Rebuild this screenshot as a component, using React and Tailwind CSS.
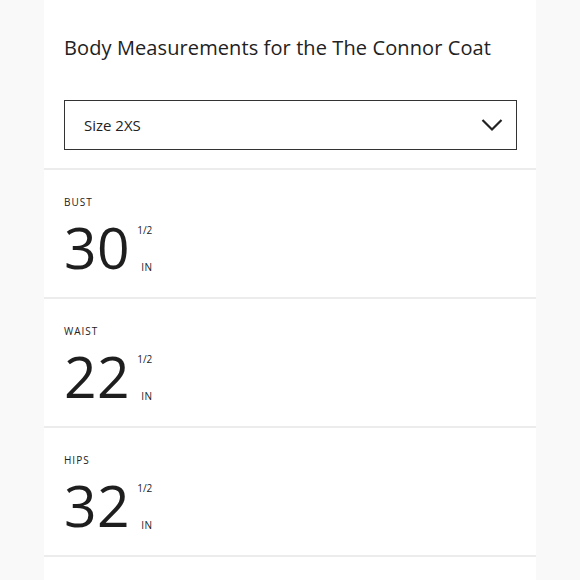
import React from "react";

const rows = [
  { label: "BUST", value: "30" },
  { label: "WAIST", value: "22" },
  { label: "HIPS", value: "32" },
];

function Row({ label, value }) {
  return (
    <div className="h-[129px] border-b-2 border-[#ececec] pl-[20px] pt-[26px]">
      <div className="text-[10px] leading-[12px] tracking-[0.1em] text-[#222]">
        {label}
      </div>
      <div className="flex mt-[11px]">
        <div className="text-[57px] leading-[57px] tracking-[0.5px] text-[#1e1e1e]">{value}</div>
        <div className="flex flex-col justify-between ml-[7px] pt-[6px] pb-[4px] h-[57px] text-[10px] leading-[10px] text-[#222]">
          <span>1/2</span>
          <span className="ml-[4px] tracking-[0.05em]">IN</span>
        </div>
      </div>
    </div>
  );
}

export default function App() {
  return (
    <div
      className="w-[580px] h-[580px] bg-[#f9f9f9] flex overflow-hidden"
      style={{ fontFamily: '"Open Sans", sans-serif' }}
    >
      <div className="ml-[44px] w-[492px] h-full bg-white flex flex-col">
        <div className="pt-[34px] pl-[20px] pr-[19px] pb-[18px] border-b-2 border-[#ececec]">
          <h1 className="text-[20px] leading-[28px] tracking-[0.1px] text-[#222]">
            Body Measurements for the The Connor Coat
          </h1>
          <div className="mt-[38px] h-[50px] border-[1.5px] border-[#333] flex items-center justify-between pl-[19px] pr-[13px]">
            <span className="text-[15px] text-[#222]">Size 2XS</span>
            <svg width="22" height="14" viewBox="0 0 22 14" fill="none">
              <path d="M1.5 2 L11 11.5 L20.5 2" stroke="#222" strokeWidth="2.2" />
            </svg>
          </div>
        </div>
        {rows.map((r) => (
          <Row key={r.label} {...r} />
        ))}
      </div>
    </div>
  );
}
